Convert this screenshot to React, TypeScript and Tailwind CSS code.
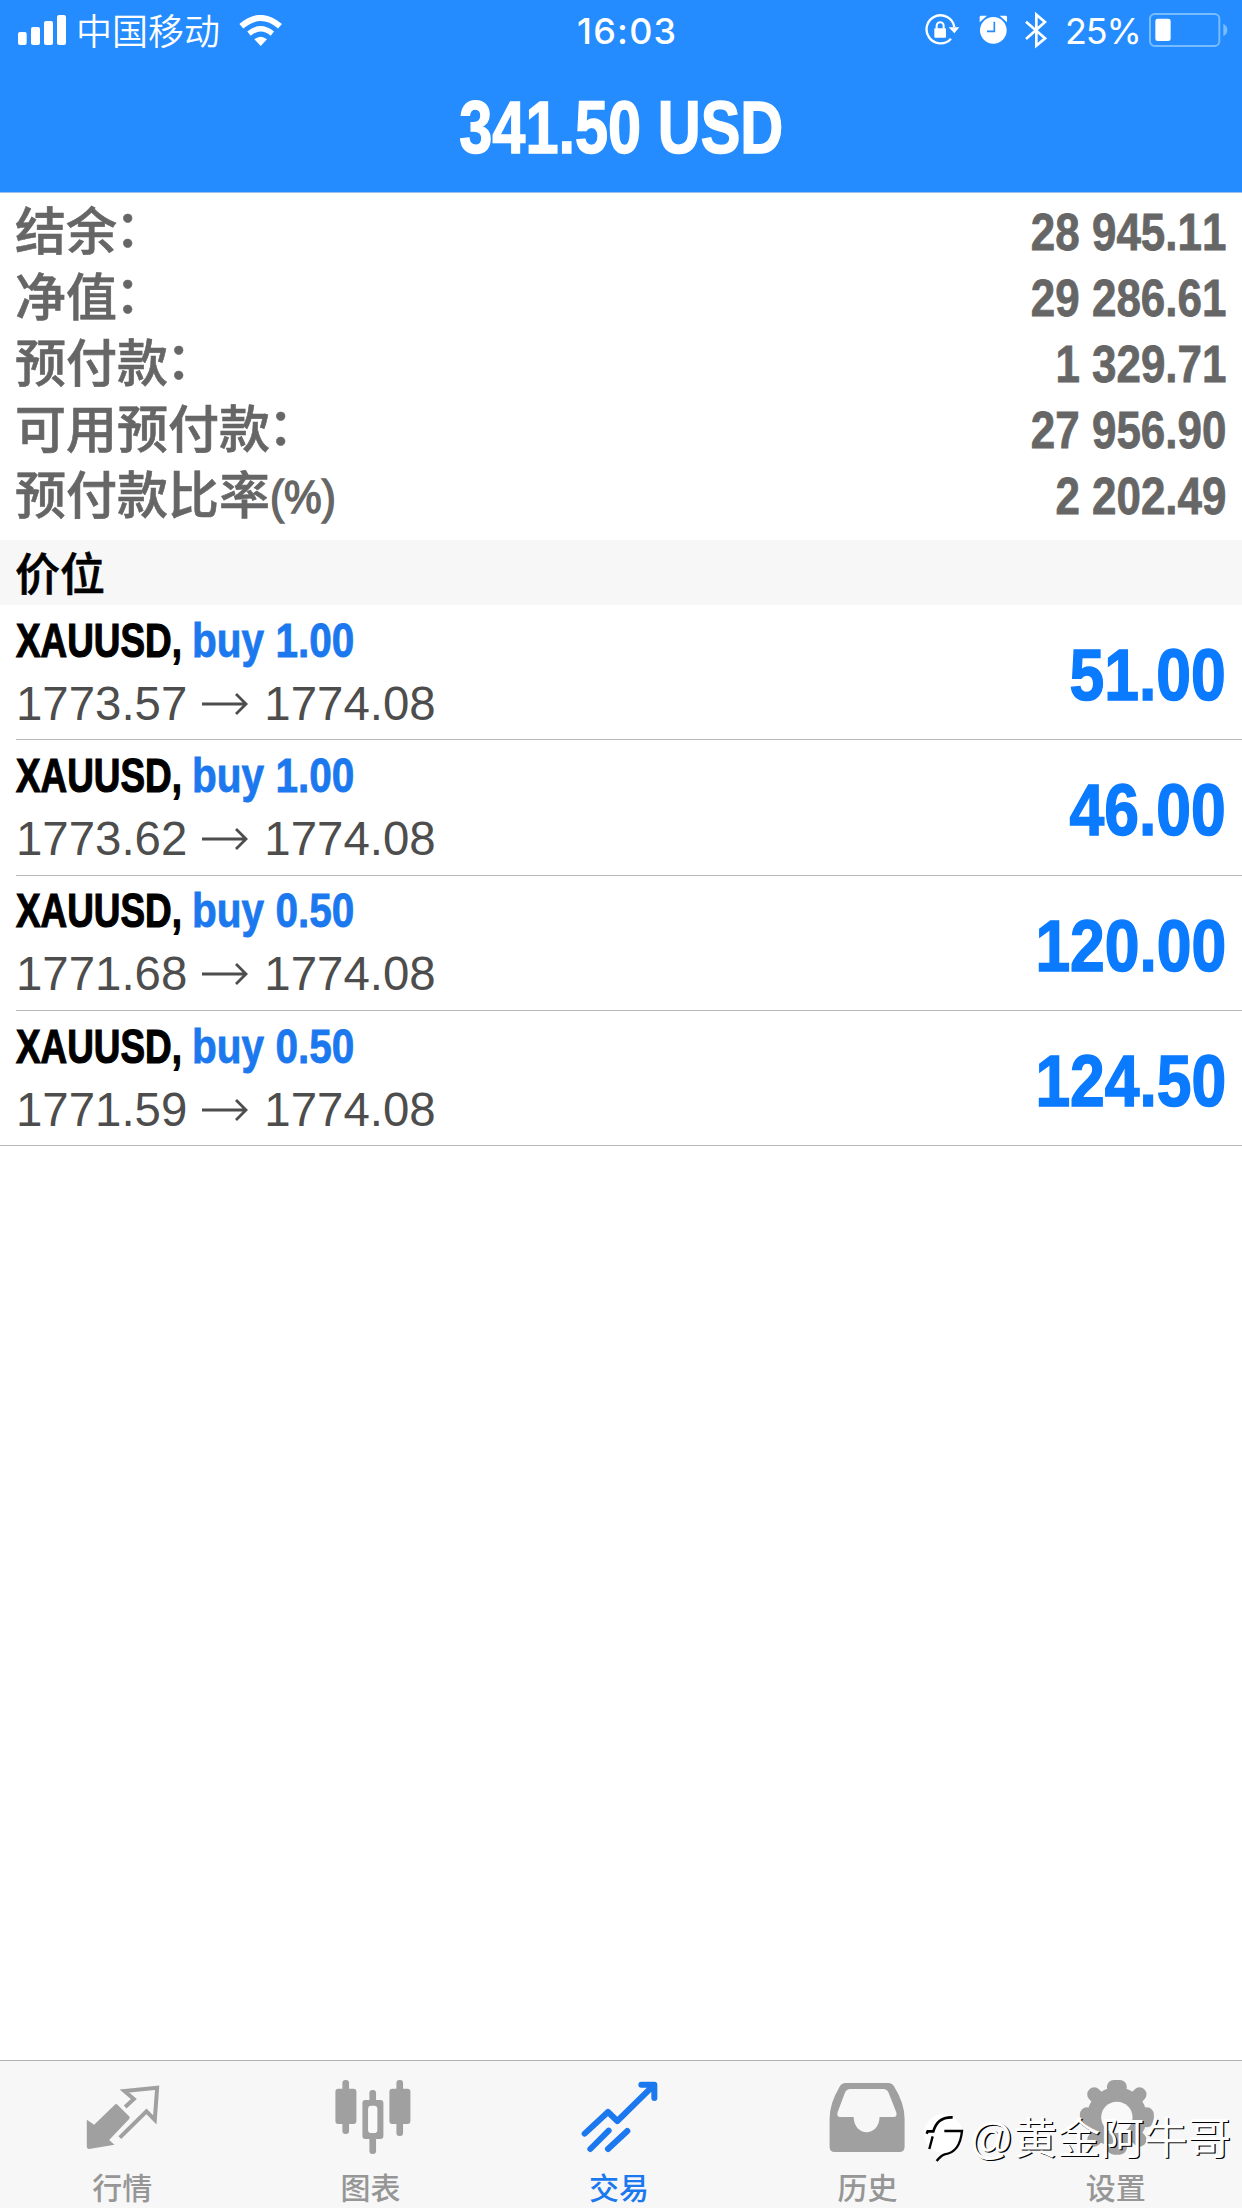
import type { ReactNode } from "react";

const summary = [
  { label: "结余", colon: "：", value: "28 945.11" },
  { label: "净值", colon: "：", value: "29 286.61" },
  { label: "预付款", colon: "：", value: "1 329.71" },
  { label: "可用预付款", colon: "：", value: "27 956.90" },
  { label: "预付款比率", suffix: "(%)", value: "2 202.49" },
];

const positions = [
  { symbol: "XAUUSD", side: "buy 1.00", open: "1773.57", current: "1774.08", profit: "51.00" },
  { symbol: "XAUUSD", side: "buy 1.00", open: "1773.62", current: "1774.08", profit: "46.00" },
  { symbol: "XAUUSD", side: "buy 0.50", open: "1771.68", current: "1774.08", profit: "120.00" },
  { symbol: "XAUUSD", side: "buy 0.50", open: "1771.59", current: "1774.08", profit: "124.50" },
];

function StatusBar() {
  return (
    <div className="grid h-[60px] grid-cols-[1fr_120px_1fr] items-center text-white">
      <div className="flex items-center pl-[18px]">
        <svg className="h-[30px] w-[48px]" viewBox="54 45 144 90" fill="currentColor">
          <rect x="54" y="96" width="26" height="39" rx="6" />
          <rect x="93" y="81" width="27" height="54" rx="6" />
          <rect x="132" y="63" width="27" height="72" rx="6" />
          <rect x="171" y="45" width="27" height="90" rx="6" />
        </svg>
        <span className="mt-[5px] ml-[10px] text-[36px] leading-[36px] font-[350]">中国移动</span>
        <svg className="ml-[19px] h-[31px] w-[43px]" viewBox="718 43 129 93" fill="none" stroke="currentColor">
          <path d="M725 77Q783 27 841 77" strokeWidth="18" />
          <path d="M748 99Q783 70 818 99" strokeWidth="16" />
          <path d="M764 116Q783 101 802 116L783 136Z" fill="currentColor" stroke="none" />
        </svg>
      </div>
      <div className="pt-[2px] pl-[16px] text-[36px] leading-[36px] font-medium tracking-[1.2px] font-[Inter]">16:03</div>
      <div className="flex items-center justify-end pr-[13px]">
        <svg className="h-[34px] w-[36px]" viewBox="134 40 108 102" fill="none" stroke="currentColor">
          <path d="M225 82A42 42 0 1 0 215 117" strokeWidth="7" />
          <path d="M208 83H240L225 101Z" fill="currentColor" stroke="none" />
          <rect x="165" y="86" width="35" height="28" rx="3" fill="currentColor" stroke="none" />
          <path d="M172 88V78A10.500 10.500 0 0 1 193 78V88" strokeWidth="6" />
        </svg>
        <svg className="ml-[18px] h-[34px] w-[30px]" viewBox="296 40 90 102">
          <path d="M301 68V52Q301 48 305 48H323ZM383 68V52Q383 48 379 48H361Z" fill="currentColor" />
          <circle cx="342" cy="92" r="40" fill="currentColor" />
          <path d="M345 66V95H323" fill="none" stroke="#248cff" strokeWidth="5" />
        </svg>
        <svg className="ml-[17px] h-[38px] w-[22px]" viewBox="436 34 66 114" fill="none" stroke="currentColor" strokeWidth="8">
          <path d="M439 66L496 116L470 138V45L496 67L439 118" />
        </svg>
        <span className="mt-[2px] ml-[18px] w-[74px] text-[36px] leading-[36px] tracking-[-1.2px] whitespace-nowrap font-[Inter]">25%</span>
        <svg className="ml-[10px] h-[36px] w-[80px]" viewBox="806 36 240 108">
          <rect x="809" y="42" width="208" height="96" rx="14" fill="none" stroke="#78bbff" strokeWidth="6" />
          <rect x="825" y="56" width="46" height="67" rx="7" fill="white" />
          <path d="M1029 72Q1041 77 1041 90T1029 108Z" fill="#78bbff" />
        </svg>
      </div>
    </div>
  );
}

function Tab({ label, active, viewBox, children }: { label: string; active?: boolean; viewBox: string; children: ReactNode }) {
  return (
    <div className={active ? "flex flex-1 flex-col items-center text-[#1b78ee]" : "flex flex-1 flex-col items-center text-[#a0a0a0]"}>
      <svg className="mt-[9px] h-[86px] w-[100px]" viewBox={viewBox} fill="none" stroke="none">
        {children}
      </svg>
      <span className={active ? "mt-[18px] mr-[4px] text-[30px] leading-[30px] font-medium" : "mt-[18px] mr-[4px] text-[30px] leading-[30px] font-medium text-[#969696]"}>{label}</span>
    </div>
  );
}

function Watermark() {
  return (
    <div className="absolute right-[11px] bottom-[44px] flex items-center text-white">
      <svg className="mr-[3px] h-[50px] w-[42px]" viewBox="78 209 126 150">
        <circle cx="136" cy="268" r="58" fill="white" />
        <path d="M86 268L89 261H106C114 235 128 218 164 219" fill="none" stroke="black" strokeWidth="8" />
        <path d="M104 276L94 314" fill="none" stroke="black" strokeWidth="7" />
        <path d="M139 260H192C188 300 174 326 140 330Q128 334 116 350" fill="none" stroke="black" strokeWidth="7" />
      </svg>
      <span className="text-[43.500px] leading-[50px] whitespace-nowrap [text-shadow:1.300px_1.300px_0.500px_#000]">@黄金阿牛哥</span>
    </div>
  );
}

export default function App() {
  return (
    <div className="relative flex h-[2208px] w-[1242px] flex-col overflow-hidden bg-white [font-kerning:none] font-['Liberation_Sans','Noto_Sans_CJK_SC',sans-serif]">
      <header className="h-[193px] border-b border-[#9cbfe8] bg-[#248cff]">
        <StatusBar />
        <h1 className="mt-[30px] text-center text-[75px] leading-[74px] font-bold whitespace-nowrap text-white">
          <span className="inline-block scale-x-[0.793] [-webkit-text-stroke:1.500px_white]">341.50 USD</span>
        </h1>
      </header>

      <section className="h-[347px] pt-[5px] pr-4 pl-[15px] text-[#666]">
        {summary.map((row) => (
          <div key={row.label} className="flex h-[66px] items-center justify-between">
            <div className="flex pt-[4px] text-[51px] leading-[66px] font-medium whitespace-nowrap [-webkit-text-stroke:0.600px_#666]">
              {row.label}
              {row.colon && <span className="-mt-[3px] -ml-[2px]">{row.colon}</span>}
              {row.suffix && (
                <span className="inline-block origin-left scale-x-[0.9] text-[47px] [-webkit-text-stroke:1.500px_#666]">{row.suffix}</span>
              )}
            </div>
            <div className="origin-right scale-x-[0.845] pt-[2px] text-[52px] leading-[66px] font-bold [-webkit-text-stroke:0.800px_#666]">{row.value}</div>
          </div>
        ))}
      </section>

      <div className="flex h-[65px] items-center bg-[#f7f7f7] pt-[6px] pl-[15px] text-[45px] leading-[58px] font-medium text-black [-webkit-text-stroke:0.600px_black]">价位</div>

      <section>
        {positions.map((p, i) => (
          <div key={i} className="relative flex h-[135.300px] items-center justify-between px-4">
            <div>
              <div className="flex h-[60px] items-center text-[48px] leading-[60px] font-bold whitespace-nowrap">
                <div className="w-[176px]">
                  <span className="inline-block origin-left scale-x-[0.768] text-black [-webkit-text-stroke:1.200px_black]">{p.symbol},</span>
                </div>
                <span className="inline-block origin-left scale-x-[0.845] text-[#1b78ee] [-webkit-text-stroke:0.800px_#1b78ee]">{p.side}</span>
              </div>
              <div className="flex h-[64px] items-center pt-[2px] text-[47.400px] leading-[62px] text-[#4d4d4d]">
                {p.open}
                <svg className="mr-[14px] ml-[15px] h-[24px] w-[48px]" viewBox="0 0 48 24" fill="none" stroke="currentColor" strokeWidth="2.800">
                  <path d="M0 12H44M34 2L44 12L34 22" />
                </svg>
                {p.current}
              </div>
            </div>
            <div className="origin-right scale-x-[0.855] pt-[5px] text-[73px] leading-[72px] font-bold text-[#0a7aff] [-webkit-text-stroke:1.500px_#0a7aff]">{p.profit}</div>
            <div className={i === positions.length - 1 ? "absolute right-0 bottom-0 left-0 h-px bg-[#b8b8ba]" : "absolute right-0 bottom-0 left-4 h-px bg-[#b8b8ba]"} />
          </div>
        ))}
      </section>

      <nav className="mt-auto flex h-[148px] border-t border-[#b2b2b2] bg-[#f7f7f7]">
        <Tab label="行情" viewBox="42.600 60 300 258">
          <path d="M81 209L103 224L165 164Q169 160 173 164L208 199Q212 203 208 207L148 270L164 284L88 297Q81 297 81 289Z" fill="currentColor" />
          <path d="M196 171L222 147L194 123L292 113L285 210L260 184L180 263" stroke="currentColor" strokeWidth="12" />
        </Tab>
        <Tab label="图表" viewBox="787.800 60 300 258">
          <g fill="currentColor">
            <rect x="846" y="90" width="20" height="162" rx="9" />
            <rect x="825" y="116" width="63" height="106" rx="9" />
            <rect x="1008" y="90" width="20" height="168" rx="9" />
            <rect x="987" y="116" width="63" height="106" rx="9" />
            <rect x="927" y="120" width="20" height="192" rx="9" />
            <rect x="906" y="150" width="63" height="117" rx="9" />
          </g>
          <rect x="923" y="167" width="28" height="82" rx="10" fill="#f9f9f9" />
        </Tab>
        <Tab label="交易" active viewBox="93 60 300 258">
          <g stroke="currentColor" strokeWidth="18" strokeLinecap="round" strokeLinejoin="round">
            <path d="M134 251L204 186L232 213L340 107M304 104H343V144" />
            <path d="M151 297L206 242M204 297L262 243" />
          </g>
        </Tab>
        <Tab label="历史" viewBox="838.200 60 300 258">
          <path
            d="M918 99H1046Q1058 99 1064 110Q1095 160 1095 206V290Q1095 306 1079 306H886Q870 306 870 290V206Q870 160 900 110Q906 99 918 99ZM932 117Q921 117 916 128L894 187Q890 201 902 201H942C944 262 1018 262 1020 201H1062Q1074 201 1070 187L1047 128Q1042 117 1031 117Z"
            fill="currentColor"
            fillRule="evenodd"
          />
        </Tab>
        <Tab label="设置" viewBox="503.400 60 300 258">
          <g stroke="currentColor" strokeWidth="42" strokeLinecap="round">
            <path d="M641 111H659M650 201V111M641 293H659M650 201V293" />
            <path d="M650 201L718 133M650 201L582 133M650 201L582 269M650 201L718 269" />
            <path d="M560 193V211M740 193V211M560 201H740" />
          </g>
          <circle cx="650" cy="202" r="90" fill="currentColor" />
          <circle cx="650" cy="202" r="47" fill="#f9f9f9" />
        </Tab>
      </nav>

      <Watermark />
    </div>
  );
}
